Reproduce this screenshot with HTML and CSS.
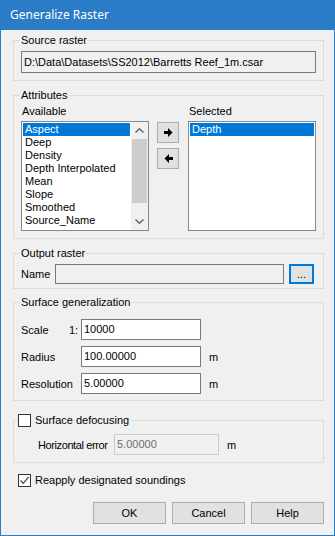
FILE: index.html
```html
<!DOCTYPE html>
<html lang="en">
<head>
<meta charset="UTF-8">
<meta name="viewport" content="width=device-width, initial-scale=1.0">
<title>Generalize Raster</title>
<link rel="stylesheet" href="styles.css">
</head>
<body>
<div class="dialog">
  <div class="titlebar">Generalize Raster</div>

  <div class="content">
    <fieldset class="group group-source">
      <legend>Source raster</legend>
      <div class="textbox readonly">D:\Data\Datasets\SS2012\Barretts Reef_1m.csar</div>
    </fieldset>

    <fieldset class="group group-attrs">
      <legend>Attributes</legend>
      <div class="attr-row">
        <div class="attr-col">
          <div class="caption">Available</div>
          <div class="listbox">
            <ul class="items">
              <li class="selected">Aspect</li>
              <li>Deep</li>
              <li>Density</li>
              <li>Depth Interpolated</li>
              <li>Mean</li>
              <li>Slope</li>
              <li>Smoothed</li>
              <li>Source_Name</li>
            </ul>
            <div class="scrollbar">
              <div class="scroll-arrow">
                <svg width="9" height="5" viewBox="0 0 9 5"><path d="M0.5 4.5 L4.5 0.8 L8.5 4.5" fill="none" stroke="#606060" stroke-width="1.4"/></svg>
              </div>
              <div class="scroll-thumb"></div>
              <div class="scroll-track"></div>
              <div class="scroll-arrow">
                <svg width="9" height="5" viewBox="0 0 9 5"><path d="M0.5 0.5 L4.5 4.2 L8.5 0.5" fill="none" stroke="#606060" stroke-width="1.4"/></svg>
              </div>
            </div>
          </div>
        </div>

        <div class="move-btns">
          <button class="btn btn-move">
            <svg width="9" height="9" viewBox="0 0 9 9"><path d="M0 3 H4 V0 L8.5 4.5 L4 9 V6 H0 Z" fill="#000"/></svg>
          </button>
          <button class="btn btn-move">
            <svg width="9" height="9" viewBox="0 0 9 9"><path d="M9 3 H5 V0 L0.5 4.5 L5 9 V6 H9 Z" fill="#000"/></svg>
          </button>
        </div>

        <div class="attr-col">
          <div class="caption">Selected</div>
          <div class="listbox">
            <ul class="items">
              <li class="selected">Depth</li>
            </ul>
          </div>
        </div>
      </div>
    </fieldset>

    <fieldset class="group group-output">
      <legend>Output raster</legend>
      <div class="name-row">
        <span class="label">Name</span>
        <div class="textbox readonly name-box"></div>
        <button class="btn btn-browse">...</button>
      </div>
    </fieldset>

    <fieldset class="group group-surface">
      <legend>Surface generalization</legend>
      <div class="form-row">
        <span class="label label-wide">Scale</span>
        <span class="ratio">1:</span>
        <div class="textbox input">10000</div>
      </div>
      <div class="form-row">
        <span class="label label-wide">Radius</span>
        <span class="ratio"></span>
        <div class="textbox input">100.00000</div>
        <span class="unit">m</span>
      </div>
      <div class="form-row">
        <span class="label label-wide">Resolution</span>
        <span class="ratio"></span>
        <div class="textbox input">5.00000</div>
        <span class="unit">m</span>
      </div>
    </fieldset>

    <fieldset class="group group-defocus">
      <legend class="check-legend">
        <span class="checkbox"></span>
        <span>Surface defocusing</span>
      </legend>
      <div class="form-row">
        <span class="label label-error">Horizontal error</span>
        <div class="textbox disabled">5.00000</div>
        <span class="unit">m</span>
      </div>
    </fieldset>

    <div class="check-row">
      <span class="checkbox checked">
        <svg width="11" height="11" viewBox="0 0 11 11"><path d="M1.5 5.5 L4.2 8.3 L9.6 2" fill="none" stroke="#4d4d4d" stroke-width="1.3"/></svg>
      </span>
      <span>Reapply designated soundings</span>
    </div>

    <div class="actions">
      <button class="btn btn-action">OK</button>
      <button class="btn btn-action">Cancel</button>
      <button class="btn btn-action">Help</button>
    </div>
  </div>
</div>
</body>
</html>
```

FILE: styles.css
```css
/* Windows style dialog */
* {
  box-sizing: border-box;
}
body {
  margin: 0;
  font-family: "Liberation Sans", Arial, sans-serif;
  font-size: 11px;
  color: #000;
}
.dialog {
  width: 335px;
  height: 536px;
  background-color: #f0f0f0;
  border: 1px solid #2b7cc6;
  border-top: none;
}
.titlebar {
  height: 30px;
  background-color: #2b7cc6;
  color: #fff;
  font-family: "Noto Sans", sans-serif;
  font-size: 12px;
  line-height: 30px;
  padding-left: 9px;
}
.content {
  padding: 4px 0 0 12px;
}

/* Group boxes */
.group {
  width: 311px;
  margin: 0;
  border: 1px solid #dcdcdc;
  padding: 4px 7px 7px 7px;
}
.group legend {
  padding: 0 1px;
  margin-left: -1px;
  line-height: 13px;
}
.group-attrs,
.group-output {
  margin-top: 8px;
}
.group-attrs {
  padding-top: 3px;
}
.group-output {
  padding-top: 4px;
  padding-bottom: 4px;
}
.group-surface {
  margin-top: 7px;
  padding-top: 10px;
  padding-bottom: 6px;
}
.group-defocus {
  margin-top: 13px;
  padding-top: 7px;
}

/* Text boxes */
.textbox {
  height: 21px;
  border: 1px solid #7a7a7a;
  background-color: #fff;
  line-height: 19px;
  padding-left: 2px;
  white-space: nowrap;
  overflow: hidden;
}
.textbox.readonly {
  background-color: #f0f0f0;
}
.group-source .textbox {
  height: 22px;
  line-height: 20px;
}
.textbox.disabled {
  width: 105px;
  border-color: #cccccc;
  background-color: #f0f0f0;
  color: #6d6d6d;
}
.textbox.input {
  width: 120px;
}

/* Attributes lists */
.attr-row {
  display: flex;
}
.attr-col {
  width: 128px;
}
.caption {
  line-height: 13px;
  margin-bottom: 3px;
  padding-left: 1px;
}
.listbox {
  display: flex;
  height: 110px;
  border: 1px solid #828790;
  background-color: #fff;
}
.items {
  flex: 1;
  list-style: none;
  margin: 0;
  padding: 1px;
}
.items li {
  height: 13px;
  line-height: 13px;
  padding-left: 2px;
}
.items li.selected {
  background-color: #0078d7;
  color: #fff;
}
.scrollbar {
  width: 17px;
  display: flex;
  flex-direction: column;
  background-color: #f0f0f0;
}
.scroll-arrow {
  height: 17px;
  display: flex;
  align-items: center;
  justify-content: center;
}
.scroll-thumb {
  height: 64px;
  margin: 0 1px;
  background-color: #cdcdcd;
}
.scroll-track {
  flex: 1;
}
.move-btns {
  display: flex;
  flex-direction: column;
  gap: 5px;
  padding-top: 17px;
  margin: 0 9px 0 8px;
}

/* Buttons */
.btn {
  border: 1px solid #adadad;
  background-color: #e1e1e1;
  font-family: inherit;
  font-size: 11px;
  color: #000;
  padding: 0;
  display: flex;
  align-items: center;
  justify-content: center;
}
.btn-move {
  width: 22px;
  height: 21px;
}
.btn-browse {
  width: 25px;
  height: 20px;
  border: 2px solid #0078d7;
  margin-left: 5px;
  line-height: 12px;
}
.btn-action {
  width: 73px;
  height: 22px;
}

/* Form rows */
.name-row {
  display: flex;
  align-items: center;
}
.name-row .label {
  width: 34px;
}
.name-box {
  width: 229px;
  height: 20px;
}
.form-row {
  display: flex;
  align-items: center;
  margin-bottom: 6px;
}
.form-row:last-child {
  margin-bottom: 0;
}
.label-wide {
  width: 48px;
}
.ratio {
  width: 12px;
}
.label-error {
  width: 76px;
  padding-left: 17px;
  box-sizing: content-box;
  letter-spacing: -0.4px;
  white-space: nowrap;
}
.unit {
  margin-left: 8px;
}

/* Check boxes */
.checkbox {
  width: 13px;
  height: 13px;
  border: 1px solid #333;
  background-color: #fff;
  display: inline-flex;
  align-items: center;
  justify-content: center;
}
.check-legend {
  display: flex;
  align-items: center;
  gap: 4px;
}
.group .check-legend {
  margin-left: -3px;
  padding: 0 2px 0 0;
}
.check-row {
  display: flex;
  align-items: center;
  gap: 4px;
  margin: 11px 0 0 5px;
  line-height: 13px;
}

/* Dialog buttons */
.actions {
  display: flex;
  gap: 6px;
  width: 311px;
  justify-content: flex-end;
  margin-top: 15px;
}
```
